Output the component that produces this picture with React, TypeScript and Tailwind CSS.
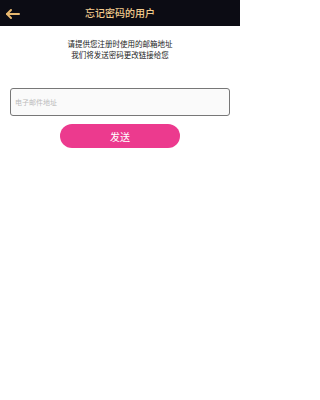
export default function App() {
  return (
    <div className="w-[240px] h-[400px] bg-white flex flex-col" style={{ fontFamily: '"Noto Sans CJK SC", "Noto Sans", sans-serif' }}>
      <div className="h-[26px] bg-[#0c0c14] flex items-center relative">
        <button className="absolute left-[5px] top-[8px]">
          <svg width="16" height="12" viewBox="0 0 16 12" fill="none" stroke="#e9b96f" strokeWidth="2" strokeLinecap="round" strokeLinejoin="round">
            <path d="M2 6h12" />
            <path d="M6 2 2 6l4 4" />
          </svg>
        </button>
        <h1 className="flex-1 text-center text-[10px] leading-[26px] font-medium text-[#f2cb8e]">忘记密码的用户</h1>
      </div>

      <div className="flex flex-col items-center pt-[12px]">
        <p className="text-[7.5px] leading-[11px] text-[#222] text-center">
          请提供您注册时使用的邮箱地址
          <br />
          我们将发送密码更改链接给您
        </p>
      </div>

      <div className="px-[10px] pt-[26px]">
        <input
          placeholder="电子邮件地址"
          className="w-full h-[28px] border border-[#777] rounded-[3px] bg-[#fafafa] px-[4px] text-[7px] text-[#333] placeholder:text-[#bbb] outline-none"
        />
      </div>

      <div className="flex justify-center pt-[8px]">
        <button className="w-[120px] h-[24px] rounded-full bg-[#ec3a8e] text-white text-[10px]">发送</button>
      </div>
    </div>
  )
}
